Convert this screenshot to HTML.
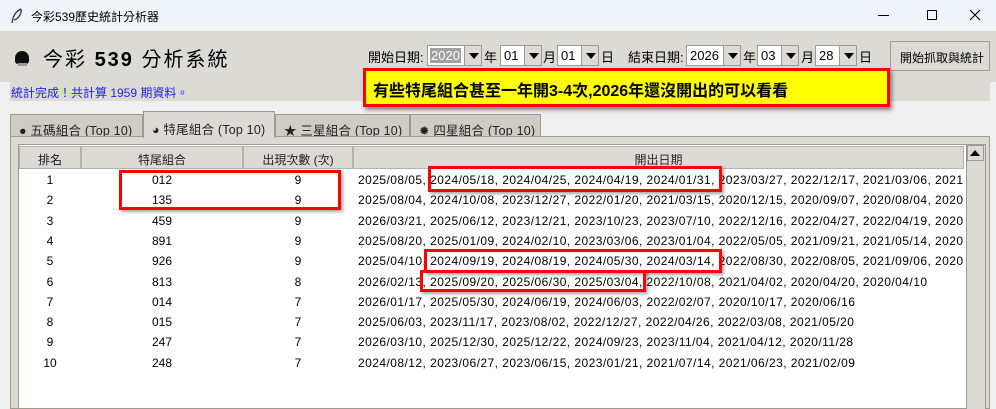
<!DOCTYPE html>
<html><head><meta charset="utf-8"><style>
*{margin:0;padding:0;box-sizing:border-box}
body{width:996px;height:409px;overflow:hidden;background:#f0f0f0;font-family:"Liberation Sans","Noto Sans CJK TC",sans-serif;font-size:12px;color:#000;position:relative}
.a{position:absolute}
.t{white-space:nowrap}
.cb{position:absolute;height:21px;background:#fff;border:1px solid #9e9a91}
.cb span{position:absolute;left:3px;top:2px;font-size:13px}
.cb i{position:absolute;right:0;top:0;width:17px;height:19px;background:#dcdad5;border-left:1px solid #9e9a91}
.cb i:after{content:"";position:absolute;left:4px;top:7px;border-left:5px solid transparent;border-right:5px solid transparent;border-top:6px solid #000}
.lb{position:absolute;font-size:13px;top:47px}
.tab{position:absolute;top:114px;height:23px;background:#cfccc5;border:1px solid #9e9a91;border-bottom:none;font-size:12.5px;letter-spacing:0.2px;padding:5px 0 0 8px;color:#222;overflow:hidden}
.hd{position:absolute;top:146px;height:23px;background:#dcdad5;border:1px solid #b5b2ab;text-align:center;padding-top:4px;color:#222}
.row{position:absolute;left:19px;height:20px;width:944px}
.row div{position:absolute;top:3px}
.rb{position:absolute;border:3px solid #f00;box-shadow:2px 2px 3px rgba(0,0,0,.35)}
</style></head><body>
<div class="a" style="left:0;top:0;width:996px;height:31px;background:#eef4f9"></div>
<svg class="a" style="left:10px;top:8px" width="14" height="16" viewBox="0 0 14 16"><path d="M11 1C6 3 3 8 2 15M11 1C12 6 8 11 4 12" stroke="#333" fill="none" stroke-width="1.3"/></svg>
<div class="a t" style="left:31px;top:8px;font-size:12px">今彩539歷史統計分析器</div>
<div class="a" style="left:878px;top:15px;width:11px;height:1px;background:#000"></div>
<div class="a" style="left:927px;top:10px;width:10px;height:10px;border:1px solid #000;border-radius:1px"></div>
<svg class="a" style="left:969px;top:9px" width="12" height="12"><path d="M1 1L11 11M11 1L1 11" stroke="#000" stroke-width="1.1"/></svg>
<div class="a" style="left:0;top:31px;width:996px;height:51px;background:#dcdad5"></div>
<div class="a" style="left:10px;top:82px;width:980px;height:19px;background:#dcdad5"></div>
<div class="a" style="left:15px;top:51px;width:14px;height:13px;background:#111;border-radius:7px 7px 3px 3px"></div>
<div class="a" style="left:18px;top:63px;width:9px;height:3px;background:#999"></div>
<div class="a t" style="left:43px;top:43px;font-size:20px;letter-spacing:2px">今彩 <b>539</b> 分析系統</div>
<div class="lb t" style="left:368px">開始日期:</div>
<div class="cb" style="left:427px;top:45px;width:55px"><span style="background:#a0a0a0;color:#fff;left:2px;padding:0 1px">2020</span><i></i></div>
<div class="lb t" style="left:484px">年</div>
<div class="cb" style="left:500px;top:45px;width:42px"><span>01</span><i></i></div>
<div class="lb t" style="left:543px">月</div>
<div class="cb" style="left:557px;top:45px;width:42px"><span>01</span><i></i></div>
<div class="lb t" style="left:601px">日</div>
<div class="lb t" style="left:628px">結束日期:</div>
<div class="cb" style="left:686px;top:45px;width:55px"><span>2026</span><i></i></div>
<div class="lb t" style="left:743px">年</div>
<div class="cb" style="left:757px;top:45px;width:42px"><span>03</span><i></i></div>
<div class="lb t" style="left:801px">月</div>
<div class="cb" style="left:815px;top:45px;width:42px"><span>28</span><i></i></div>
<div class="lb t" style="left:859px">日</div>
<div class="a t" style="left:890px;top:41px;width:100px;height:30px;border:1px solid #9e9a91;background:#dcdad5;font-size:12px;padding:7px 0 0 9px">開始抓取與統計</div>
<div class="a t" style="left:11px;top:84px;color:#2323e0;font-size:12px">統計完成！共計算 1959 期資料。</div>
<div class="a t" style="left:363px;top:68px;width:527px;height:39px;background:#ff0;border:3px solid #f00;box-shadow:2px 3px 4px rgba(0,0,0,.45);font-weight:bold;font-size:16px;padding:6px 0 0 7px;font-family:'Liberation Sans','Noto Sans CJK TC',sans-serif">有些特尾組合甚至一年開3-4次,2026年還沒開出的可以看看</div>
<div class="tab t" style="left:10px;width:133px">● 五碼組合 (Top 10)</div>
<div class="tab t" style="left:275px;width:135px">★ 三星組合 (Top 10)</div>
<div class="tab t" style="left:410px;width:131px">✹ 四星組合 (Top 10)</div>
<div class="a" style="left:10px;top:136px;width:980px;height:273px;background:#dcdad5;border:1px solid #9e9a91"></div>
<div class="tab t" style="left:143px;top:111px;width:132px;height:27px;background:#dcdad5;padding-top:7px">◕ 特尾組合 (Top 10)</div>
<div class="a" style="left:18px;top:144px;width:968px;height:265px;background:#fff;border:1px solid #9e9a91"></div>
<div class="hd" style="left:19px;width:62px">排名</div>
<div class="hd" style="left:81px;width:162px">特尾組合</div>
<div class="hd" style="left:243px;width:110px">出現次數 (次)</div>
<div class="hd" style="left:353px;width:611px">開出日期</div>
<div class="a" style="left:966px;top:145px;width:19px;height:264px;background:#dcdad5;border-left:1px solid #9e9a91"></div>
<div class="a" style="left:967px;top:145px;width:17px;height:16px;border:1px solid #9e9a91"></div>
<div class="a" style="left:970px;top:150px;border-left:5px solid transparent;border-right:5px solid transparent;border-bottom:6px solid #000"></div>
<div id="rows"></div>
<div class="rb" style="left:119px;top:170px;width:222px;height:40px"></div>
<div class="rb" style="left:428px;top:166px;width:294px;height:26px"></div>
<div class="rb" style="left:424px;top:249px;width:298px;height:24px"></div>
<div class="rb" style="left:420px;top:270px;width:226px;height:22px"></div>
<script>
var d=[["012",9,"2025/08/05, 2024/05/18, 2024/04/25, 2024/04/19, 2024/01/31, 2023/03/27, 2022/12/17, 2021/03/06, 2021"],
["135",9,"2025/08/04, 2024/10/08, 2023/12/27, 2022/01/20, 2021/03/15, 2020/12/15, 2020/09/07, 2020/08/04, 2020"],
["459",9,"2026/03/21, 2025/06/12, 2023/12/21, 2023/10/23, 2023/07/10, 2022/12/16, 2022/04/27, 2022/04/19, 2020"],
["891",9,"2025/08/20, 2025/01/09, 2024/02/10, 2023/03/06, 2023/01/04, 2022/05/05, 2021/09/21, 2021/05/14, 2020"],
["926",9,"2025/04/10, 2024/09/19, 2024/08/19, 2024/05/30, 2024/03/14, 2022/08/30, 2022/08/05, 2021/09/06, 2020"],
["813",8,"2026/02/13, 2025/09/20, 2025/06/30, 2025/03/04, 2022/10/08, 2021/04/02, 2020/04/20, 2020/04/10"],
["014",7,"2026/01/17, 2025/05/30, 2024/06/19, 2024/06/03, 2022/02/07, 2020/10/17, 2020/06/16"],
["015",7,"2025/06/03, 2023/11/17, 2023/08/02, 2022/12/27, 2022/04/26, 2022/03/08, 2021/05/20"],
["247",7,"2026/03/10, 2025/12/30, 2025/12/22, 2024/09/23, 2023/11/04, 2021/04/12, 2020/11/28"],
["248",7,"2024/08/12, 2023/06/27, 2023/06/15, 2023/01/21, 2021/07/14, 2021/06/23, 2021/02/09"]];
var h="";d.forEach(function(r,i){var y=170+i*20.3;
h+='<div class="row" style="top:'+y+'px"><div style="left:0;width:62px;text-align:center">'+(i+1)+'</div><div style="left:62px;width:162px;text-align:center">'+r[0]+'</div><div style="left:224px;width:110px;text-align:center">'+r[1]+'</div><div class="t" style="left:339px;overflow:hidden;width:605px;letter-spacing:0.45px">'+r[2]+'</div></div>';});
document.getElementById("rows").innerHTML=h;
</script>
</body></html>
